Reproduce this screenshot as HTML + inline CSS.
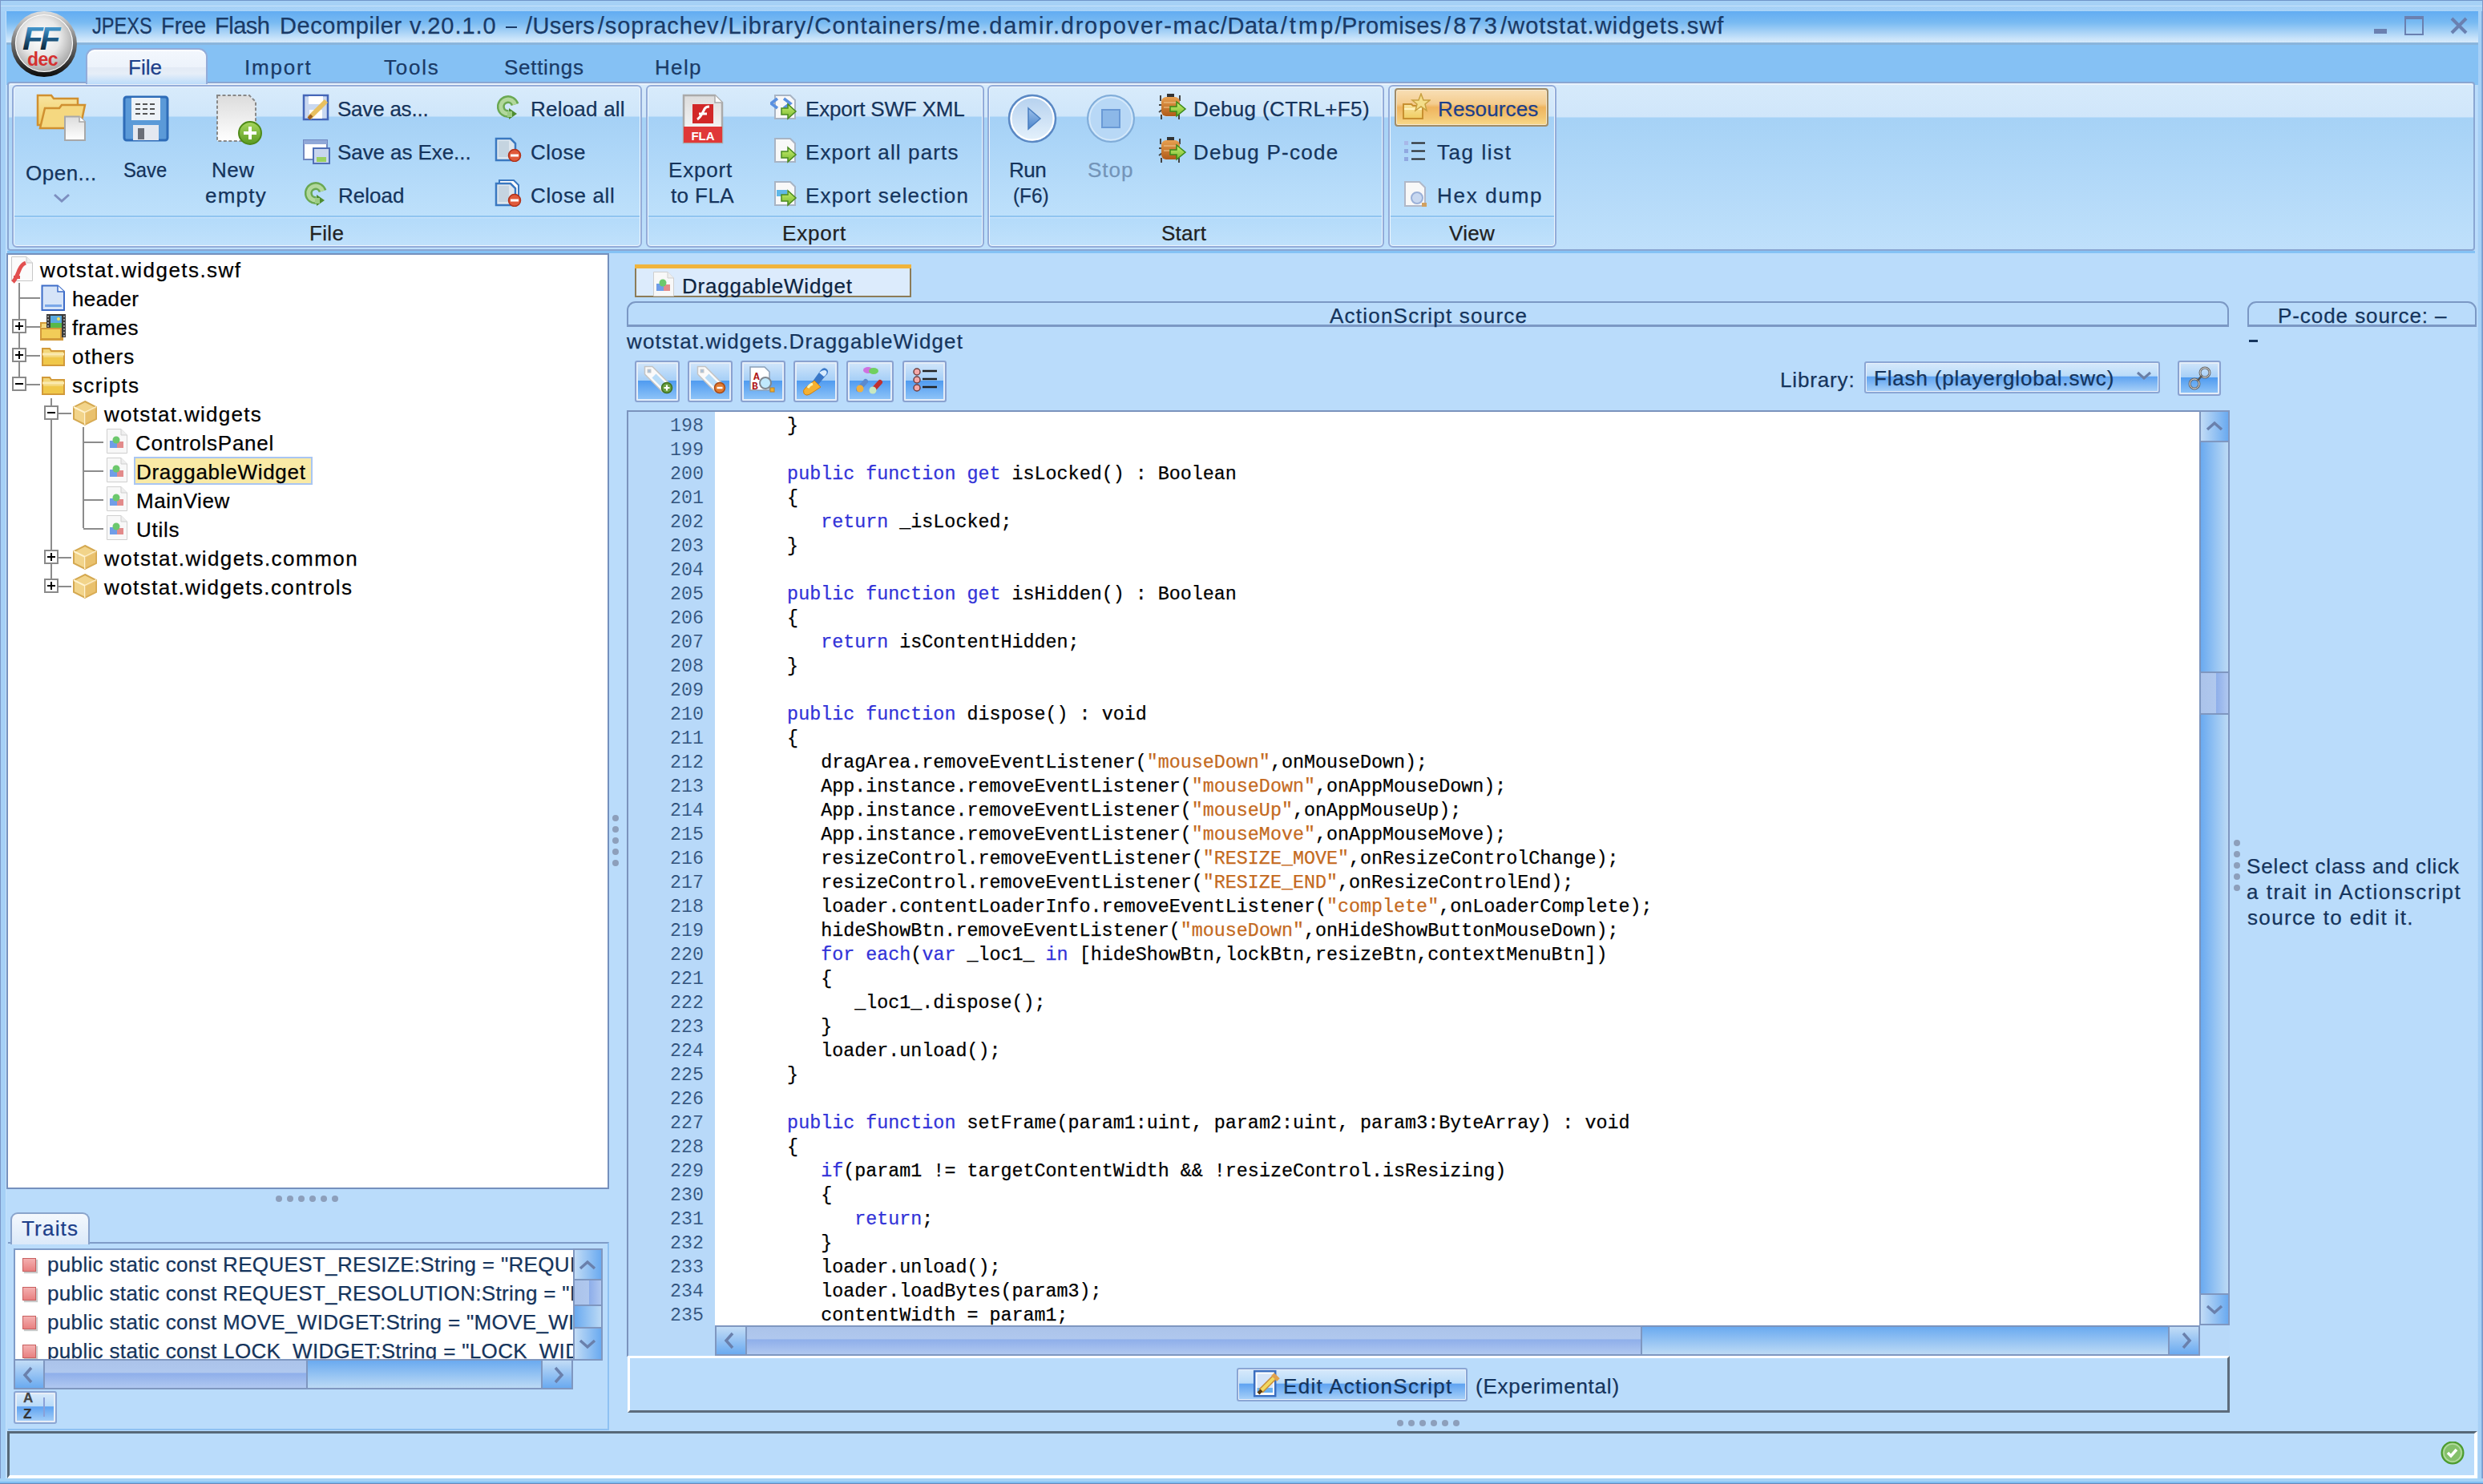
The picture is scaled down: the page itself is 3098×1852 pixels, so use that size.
<!DOCTYPE html>
<html><head><meta charset="utf-8">
<style>
html,body{margin:0;padding:0;}
body{width:3098px;height:1852px;position:relative;overflow:hidden;background:#badcfb;font-family:"Liberation Sans",sans-serif;}
body div{position:absolute;box-sizing:border-box;}
.t{white-space:pre;-webkit-text-stroke:0.25px currentColor;}
.mono{font-family:"Liberation Mono",monospace;}
</style></head><body>

<div style="left:0px;top:0px;width:3098px;height:1852px;background:linear-gradient(90deg,#7c98c8 0,#7c98c8 1px,#a6d0f6 1px,#a6d0f6 7px,#c5e2fb 7px,#c5e2fb 8px,transparent 8px,transparent 3091px,#c5e2fb 3091px,#a6d0f6 3092px,#a6d0f6 3096px,#7fbdf2 3096px,#7c98c8 3097px);"></div>
<div style="left:0px;top:0px;width:3098px;height:14px;background:linear-gradient(#7095c8 0,#7095c8 1px,#a6d1f6 1px,#a6d1f6 7px,#c8e3fb 7px,#c8e3fb 8px,#a6d1f6 8px,#a9d3f8 14px);"></div>
<div style="left:0px;top:0px;width:1px;height:1852px;background:#7c98c8;"></div>
<div style="left:3097px;top:0px;width:1px;height:1852px;background:#7c98c8;"></div>
<div style="left:8px;top:14px;width:3084px;height:40px;background:linear-gradient(#62acf2 0%,#78baf2 35%,#a8d2f6 65%,#c8e3fa 85%,#d6eafb 97%);"></div>
<div style="left:8px;top:53px;width:3084px;height:3px;background:#8ab5dc;"></div>
<div style="left:8px;top:56px;width:3084px;height:50px;background:#85c1f4;"></div>
<div style="left:0px;top:1845px;width:3098px;height:7px;background:linear-gradient(#a5d3f7 0,#a5d3f7 4px,#7fbff3 4px,#7fbff3 6px,#6a88b8 6px);"></div>
<div class="t" style="left:114.70px;top:18.45px;font-size:29px;line-height:29px;color:#1a3a66;letter-spacing:0.000px;transform:scaleX(0.8141);transform-origin:0px 0;">JPEXS</div>
<div class="t" style="left:200.50px;top:18.45px;font-size:29px;line-height:29px;color:#1a3a66;letter-spacing:0.000px;transform:scaleX(0.9417);transform-origin:0px 0;">Free</div>
<div class="t" style="left:268.00px;top:18.45px;font-size:29px;line-height:29px;color:#1a3a66;letter-spacing:-0.500px;">Flash</div>
<div class="t" style="left:349.00px;top:18.45px;font-size:29px;line-height:29px;color:#1a3a66;letter-spacing:0.600px;">Decompiler</div>
<div class="t" style="left:511.00px;top:18.45px;font-size:29px;line-height:29px;color:#1a3a66;letter-spacing:0.943px;">v.20.1.0</div>
<div style="left:631px;top:33px;width:14px;height:2px;background:#1a3a66;"></div>
<div class="t" style="left:656.00px;top:18.45px;font-size:29px;line-height:29px;color:#1a3a66;letter-spacing:0.400px;">/Users</div>
<div class="t" style="left:745.70px;top:18.45px;font-size:29px;line-height:29px;color:#1a3a66;letter-spacing:1.000px;">/soprachev</div>
<div class="t" style="left:899.00px;top:18.45px;font-size:29px;line-height:29px;color:#1a3a66;letter-spacing:1.357px;">/Library</div>
<div class="t" style="left:1006.70px;top:18.45px;font-size:29px;line-height:29px;color:#1a3a66;letter-spacing:1.390px;">/Containers</div>
<div class="t" style="left:1171.00px;top:18.45px;font-size:29px;line-height:29px;color:#1a3a66;letter-spacing:1.743px;">/me.damir.dropover-mac</div>
<div class="t" style="left:1522.80px;top:18.45px;font-size:29px;line-height:29px;color:#1a3a66;letter-spacing:0.550px;">/Data</div>
<div class="t" style="left:1597.70px;top:18.45px;font-size:29px;line-height:29px;color:#1a3a66;letter-spacing:3.100px;">/tmp</div>
<div class="t" style="left:1665.40px;top:18.45px;font-size:29px;line-height:29px;color:#1a3a66;letter-spacing:0.512px;">/Promises</div>
<div class="t" style="left:1802.00px;top:18.45px;font-size:29px;line-height:29px;color:#1a3a66;letter-spacing:3.133px;">/873</div>
<div class="t" style="left:1872.00px;top:18.45px;font-size:29px;line-height:29px;color:#1a3a66;letter-spacing:1.074px;">/wotstat.widgets.swf</div>
<div style="left:2962px;top:36px;width:16px;height:6px;background:#6a80b0;"></div>
<div style="left:3000px;top:20px;width:24px;height:24px;border:2px solid #6a80b0;border-top-width:4px;"></div>
<svg style="position:absolute;left:3057px;top:21px" width="22" height="22" viewBox="0 0 22 22"><path d="M2 2L20 20M20 2L2 20" stroke="#6a80b0" stroke-width="4"/></svg>
<svg style="position:absolute;left:12px;top:12px" width="86" height="86" viewBox="0 0 86 86">
<defs>
<radialGradient id="lg1" cx="45%" cy="40%" r="60%"><stop offset="0" stop-color="#ffffff"/><stop offset="0.55" stop-color="#e8e8e8"/><stop offset="1" stop-color="#a8a8a8"/></radialGradient>
<linearGradient id="lg2" x1="0" y1="0" x2="0" y2="1"><stop offset="0" stop-color="#e0e0e0"/><stop offset="0.45" stop-color="#7a7a7a"/><stop offset="1" stop-color="#0a0a0a"/></linearGradient>
<linearGradient id="lg3" x1="0" y1="0" x2="0" y2="1"><stop offset="0" stop-color="#5ab8f2"/><stop offset="0.45" stop-color="#236392"/><stop offset="1" stop-color="#000000"/></linearGradient>
</defs>
<circle cx="43" cy="43" r="41" fill="url(#lg2)"/>
<circle cx="43" cy="42" r="35.5" fill="url(#lg1)" stroke="#fff" stroke-width="1.2"/>
<text x="16" y="53" font-family="Liberation Sans" font-weight="bold" font-style="italic" font-size="42" fill="url(#lg3)" letter-spacing="-4" transform="scale(1,0.95)">FF</text>
<text x="22" y="70" font-family="Liberation Sans" font-weight="bold" font-size="23" fill="#d43030" letter-spacing="-0.5">dec</text>
</svg>
<div class="t" style="left:305.00px;top:70.99px;font-size:26px;line-height:26px;color:#1a3a66;letter-spacing:1.800px;">Import</div>
<div class="t" style="left:479.00px;top:70.99px;font-size:26px;line-height:26px;color:#1a3a66;letter-spacing:1.750px;">Tools</div>
<div class="t" style="left:629.00px;top:70.99px;font-size:26px;line-height:26px;color:#1a3a66;letter-spacing:0.714px;">Settings</div>
<div class="t" style="left:817.00px;top:70.99px;font-size:26px;line-height:26px;color:#1a3a66;letter-spacing:1.333px;">Help</div>
<div style="left:9px;top:102px;width:3079px;height:211px;border:2px solid #8aa6d2;border-radius:4px;box-shadow:inset 0 2px 0 #eaf2fb;background:linear-gradient(#d6eafb 0px,#d0e6fa 42px,#a6d2f6 43px,#bfe0fb 100%);"></div>
<div style="left:9px;top:313px;width:3079px;height:3px;background:#84c2f5;"></div>
<div style="left:107px;top:60px;width:152px;height:45px;border:2px solid #93acd9;border-bottom:none;border-radius:11px 11px 0 0;box-shadow:inset 0 2px 0 #fff;background:linear-gradient(#f3f7fd 0%,#edf3fb 50%,#e3eaf5 51%,#e6eef8 70%,#bcdcfa 100%);"></div>
<div class="t" style="left:160.00px;top:70.99px;font-size:26px;line-height:26px;color:#1d3f8a;letter-spacing:0.000px;">File</div>
<div style="left:15px;top:106px;width:786px;height:203px;border:2px solid #93acd9;border-radius:6px;box-shadow:inset 0 0 0 1px #eef6fd;background:linear-gradient(#d8ebfb 0px,#cfe6fa 37px,#a5d1f6 38px,#bde0fb 161px,#90c4f0 161px,#90c4f0 163px,#cfe6fb 163px,#b4dbfa 165px,#c0e1fb 100%);"></div>
<div class="t" style="left:386.00px;top:277.99px;font-size:26px;line-height:26px;color:#222222;letter-spacing:0.333px;">File</div>
<div style="left:806px;top:106px;width:422px;height:203px;border:2px solid #93acd9;border-radius:6px;box-shadow:inset 0 0 0 1px #eef6fd;background:linear-gradient(#d8ebfb 0px,#cfe6fa 37px,#a5d1f6 38px,#bde0fb 161px,#90c4f0 161px,#90c4f0 163px,#cfe6fb 163px,#b4dbfa 165px,#c0e1fb 100%);"></div>
<div class="t" style="left:976.00px;top:277.99px;font-size:26px;line-height:26px;color:#222222;letter-spacing:0.800px;">Export</div>
<div style="left:1232px;top:106px;width:495px;height:203px;border:2px solid #93acd9;border-radius:6px;box-shadow:inset 0 0 0 1px #eef6fd;background:linear-gradient(#d8ebfb 0px,#cfe6fa 37px,#a5d1f6 38px,#bde0fb 161px,#90c4f0 161px,#90c4f0 163px,#cfe6fb 163px,#b4dbfa 165px,#c0e1fb 100%);"></div>
<div class="t" style="left:1449.00px;top:277.99px;font-size:26px;line-height:26px;color:#222222;letter-spacing:0.250px;">Start</div>
<div style="left:1732px;top:106px;width:210px;height:203px;border:2px solid #93acd9;border-radius:6px;box-shadow:inset 0 0 0 1px #eef6fd;background:linear-gradient(#d8ebfb 0px,#cfe6fa 37px,#a5d1f6 38px,#bde0fb 161px,#90c4f0 161px,#90c4f0 163px,#cfe6fb 163px,#b4dbfa 165px,#c0e1fb 100%);"></div>
<div class="t" style="left:1808.00px;top:277.99px;font-size:26px;line-height:26px;color:#222222;letter-spacing:0.333px;">View</div>
<div class="t" style="left:32.00px;top:202.99px;font-size:26px;line-height:26px;color:#15345c;letter-spacing:0.500px;">Open...</div>
<div class="t" style="left:154.00px;top:198.99px;font-size:26px;line-height:26px;color:#15345c;letter-spacing:0.000px;transform:scaleX(0.9153);transform-origin:0px 0;">Save</div>
<div class="t" style="left:264.00px;top:198.99px;font-size:26px;line-height:26px;color:#15345c;letter-spacing:0.500px;">New</div>
<div class="t" style="left:256.00px;top:230.99px;font-size:26px;line-height:26px;color:#15345c;letter-spacing:1.250px;">empty</div>
<div class="t" style="left:421.00px;top:122.99px;font-size:26px;line-height:26px;color:#15345c;letter-spacing:-0.222px;">Save as...</div>
<div class="t" style="left:421.00px;top:176.99px;font-size:26px;line-height:26px;color:#15345c;letter-spacing:-0.077px;">Save as Exe...</div>
<div class="t" style="left:422.00px;top:230.99px;font-size:26px;line-height:26px;color:#15345c;letter-spacing:0.000px;">Reload</div>
<div class="t" style="left:662.00px;top:122.99px;font-size:26px;line-height:26px;color:#15345c;letter-spacing:0.222px;">Reload all</div>
<div class="t" style="left:662.00px;top:176.99px;font-size:26px;line-height:26px;color:#15345c;letter-spacing:0.500px;">Close</div>
<div class="t" style="left:662.00px;top:230.99px;font-size:26px;line-height:26px;color:#15345c;letter-spacing:0.625px;">Close all</div>
<div class="t" style="left:834.00px;top:198.99px;font-size:26px;line-height:26px;color:#15345c;letter-spacing:0.800px;">Export</div>
<div class="t" style="left:837.00px;top:230.99px;font-size:26px;line-height:26px;color:#15345c;letter-spacing:0.400px;">to FLA</div>
<div class="t" style="left:1005.00px;top:122.99px;font-size:26px;line-height:26px;color:#15345c;letter-spacing:-0.154px;">Export SWF XML</div>
<div class="t" style="left:1005.00px;top:176.99px;font-size:26px;line-height:26px;color:#15345c;letter-spacing:1.133px;">Export all parts</div>
<div class="t" style="left:1005.00px;top:230.99px;font-size:26px;line-height:26px;color:#15345c;letter-spacing:1.200px;">Export selection</div>
<div class="t" style="left:1259.00px;top:198.99px;font-size:26px;line-height:26px;color:#15345c;letter-spacing:-0.500px;">Run</div>
<div class="t" style="left:1264.00px;top:230.99px;font-size:26px;line-height:26px;color:#15345c;letter-spacing:0.000px;transform:scaleX(0.9375);transform-origin:0px 0;">(F6)</div>
<div class="t" style="left:1357.00px;top:198.99px;font-size:26px;line-height:26px;color:#7394b8;letter-spacing:1.000px;">Stop</div>
<div class="t" style="left:1489.00px;top:122.99px;font-size:26px;line-height:26px;color:#15345c;letter-spacing:0.357px;">Debug (CTRL+F5)</div>
<div class="t" style="left:1489.00px;top:176.99px;font-size:26px;line-height:26px;color:#15345c;letter-spacing:1.273px;">Debug P-code</div>
<div style="left:1740px;top:110px;width:192px;height:48px;border:2px solid #a08c68;border-radius:4px;box-shadow:inset 0 0 0 1px #f6e9cf;background:linear-gradient(#f8dfb6 0%,#f4cc8e 40%,#efb45e 50%,#f3c774 80%,#f8da8c 100%);"></div>
<div class="t" style="left:1794.00px;top:122.99px;font-size:26px;line-height:26px;color:#1d3f8a;letter-spacing:0.125px;">Resources</div>
<div class="t" style="left:1793.00px;top:176.99px;font-size:26px;line-height:26px;color:#15345c;letter-spacing:1.571px;">Tag list</div>
<div class="t" style="left:1793.00px;top:230.99px;font-size:26px;line-height:26px;color:#15345c;letter-spacing:1.714px;">Hex dump</div>
<svg width="0" height="0" style="position:absolute"><defs>
<linearGradient id="gFold" x1="0" y1="0" x2="0" y2="1"><stop offset="0" stop-color="#f8e4a0"/><stop offset="1" stop-color="#f0cc60"/></linearGradient>
<linearGradient id="gPage" x1="0" y1="0" x2="0" y2="1"><stop offset="0" stop-color="#dcdcdc"/><stop offset="1" stop-color="#ffffff"/></linearGradient>
<linearGradient id="gGreen" x1="0" y1="0" x2="0" y2="1"><stop offset="0" stop-color="#a8d860"/><stop offset="1" stop-color="#5a9a20"/></linearGradient>
<linearGradient id="gArrow" x1="0" y1="0" x2="0" y2="1"><stop offset="0" stop-color="#c8f070"/><stop offset="1" stop-color="#7ab830"/></linearGradient>
<linearGradient id="gRun" x1="0" y1="0" x2="0" y2="1"><stop offset="0" stop-color="#b4d0ee"/><stop offset="1" stop-color="#e6f2fc"/></linearGradient>
<linearGradient id="gTri" x1="0" y1="0" x2="0" y2="1"><stop offset="0" stop-color="#9cc0ea"/><stop offset="1" stop-color="#4d86cc"/></linearGradient>
<linearGradient id="gBug" x1="0" y1="0" x2="0" y2="1"><stop offset="0" stop-color="#e8a050"/><stop offset="1" stop-color="#b05a18"/></linearGradient>
<radialGradient id="gOk" cx="40%" cy="35%" r="65%"><stop offset="0" stop-color="#b8e890"/><stop offset="1" stop-color="#4a9a28"/></radialGradient>
</defs></svg>
<svg style="position:absolute;left:44px;top:116px" width="66" height="62" viewBox="0 0 66 62"><path d="M3 3H20L23 7H53V40H3Z" fill="url(#gFold)" stroke="#d09030" stroke-width="2.5"/><path d="M6 44L12 19H30L33 15H62L56 44Z" fill="#f5d880" stroke="#d09030" stroke-width="2.5"/><path d="M37 29.5H55L62 36V59H37Z" fill="url(#gPage)" stroke="#a8a8a8" stroke-width="2"/><path d="M55 29.5V36H62" fill="#fff" stroke="#a8a8a8" stroke-width="1.5"/></svg>
<svg style="position:absolute;left:152px;top:118px" width="60" height="60" viewBox="0 0 60 60"><rect x="3" y="3" width="54" height="54" rx="3" fill="#5b9ad8" stroke="#2e6cb8" stroke-width="3"/><rect x="12" y="4" width="36" height="28" fill="#eef3f8"/><path d="M17 12H42M17 18H42M17 24H42" stroke="#555" stroke-width="2" stroke-dasharray="6 3"/><rect x="14" y="38" width="32" height="19" fill="#e4e8f0"/><rect x="20" y="42" width="8" height="14" fill="#6a6e78"/></svg>
<svg style="position:absolute;left:268px;top:116px" width="62" height="66" viewBox="0 0 62 66"><path d="M3 3H43L51 11V60H3Z" fill="url(#gPage)" stroke="#888" stroke-width="2" stroke-dasharray="4 2.5"/><circle cx="44" cy="50" r="14" fill="url(#gGreen)" stroke="#4e8a18" stroke-width="2"/><path d="M44 42V58M36 50H52" stroke="#fff" stroke-width="4"/></svg>
<svg style="position:absolute;left:377px;top:117px" width="34" height="34" viewBox="0 0 34 34"><rect x="2" y="2" width="30" height="30" fill="#c9d8f0" stroke="#4466b8" stroke-width="2.5"/><rect x="8" y="3" width="18" height="10" fill="#fff"/><rect x="9" y="20" width="16" height="11" fill="#fff"/><path d="M9 30L30 9" stroke="#e8c060" stroke-width="6"/><path d="M8 31L12 27" stroke="#a06020" stroke-width="4"/></svg>
<svg style="position:absolute;left:377px;top:172px" width="36" height="34" viewBox="0 0 36 34"><rect x="2" y="3" width="29" height="24" fill="#fff" stroke="#7088c0" stroke-width="2"/><rect x="2" y="3" width="29" height="5" fill="#90a8d8"/><rect x="14" y="13" width="20" height="19" fill="#c8d6ee" stroke="#5070b8" stroke-width="2"/><rect x="18" y="24" width="12" height="6" fill="#9ad060"/></svg>
<svg style="position:absolute;left:380px;top:227px" width="30" height="32" viewBox="0 0 30 32"><path d="M22.5 11.5A9 9 0 1 0 15 23" stroke="#6aa852" stroke-width="10" fill="none"/><path d="M22.5 11.5A9 9 0 1 0 15 23" stroke="#b2d89c" stroke-width="5" fill="none"/><path d="M15 16L25 23L15 30Z" fill="#4e8c30"/><path d="M13 20H19V27H13Z" fill="#9ccc84"/></svg>
<svg style="position:absolute;left:620px;top:119px" width="30" height="32" viewBox="0 0 30 32"><path d="M22.5 11.5A9 9 0 1 0 15 23" stroke="#6aa852" stroke-width="10" fill="none"/><path d="M22.5 11.5A9 9 0 1 0 15 23" stroke="#b2d89c" stroke-width="5" fill="none"/><path d="M15 16L25 23L15 30Z" fill="#4e8c30"/><path d="M13 20H19V27H13Z" fill="#9ccc84"/></svg>
<svg style="position:absolute;left:617px;top:168px" width="34" height="34" viewBox="0 0 34 34"><path d="M2 5H20L26 11V32H2Z" fill="#dde6ee" stroke="#3a78c0" stroke-width="2.5"/><rect x="5" y="8" width="13" height="20" fill="#c5d4e0"/><circle cx="25" cy="26" r="7.5" fill="#e05a3a" stroke="#b03018" stroke-width="1.5"/><rect x="20" y="24.5" width="10" height="3" fill="#fff"/></svg>
<svg style="position:absolute;left:617px;top:224px" width="34" height="34" viewBox="0 0 34 34"><path d="M6 1H24L30 7V26H6Z" fill="#fff" stroke="#3a78c0" stroke-width="2"/><path d="M2 5H20L26 11V32H2Z" fill="#dde6ee" stroke="#3a78c0" stroke-width="2.5"/><rect x="5" y="8" width="13" height="20" fill="#c5d4e0"/><circle cx="25" cy="26" r="7.5" fill="#e05a3a" stroke="#b03018" stroke-width="1.5"/><rect x="20" y="24.5" width="10" height="3" fill="#fff"/></svg>
<svg style="position:absolute;left:850px;top:116px" width="54" height="64" viewBox="0 0 54 64"><path d="M3 3H42L51 12V62H3Z" fill="url(#gPage)" stroke="#aaa" stroke-width="2.5"/><path d="M42 3V12H51" fill="#fff" stroke="#aaa" stroke-width="1.5"/><rect x="14" y="14" width="26" height="24" fill="#d22828"/><path d="M20 33C25 30 27 24 29 20C30 18 32 17 35 17M22 26H32" stroke="#fff" stroke-width="3" fill="none"/><rect x="3" y="42" width="48" height="20" fill="#e03838"/><text x="27" y="59" text-anchor="middle" font-family="Liberation Sans" font-weight="bold" font-size="15" fill="#fff">FLA</text></svg>
<svg style="position:absolute;left:961px;top:117px" width="34" height="34" viewBox="0 0 34 34"><path d="M6 2H25L31 8V31H6Z" fill="#f8f8f8" stroke="#a8b4c4" stroke-width="2"/><path d="M9 6L1 12L9 18M17 6L25 12L17 18" stroke="#5a90e0" stroke-width="3.5" fill="none"/><path d="M14 18H22V13L32 22L22 31V26H14Z" fill="url(#gArrow)" stroke="#4a8a20" stroke-width="1.5"/></svg>
<svg style="position:absolute;left:961px;top:171px" width="34" height="34" viewBox="0 0 34 34"><path d="M6 2H25L31 8V31H6Z" fill="#f8f8f8" stroke="#a8b4c4" stroke-width="2"/><path d="M14 18H22V13L32 22L22 31V26H14Z" fill="url(#gArrow)" stroke="#4a8a20" stroke-width="1.5"/></svg>
<svg style="position:absolute;left:961px;top:225px" width="34" height="34" viewBox="0 0 34 34"><path d="M6 2H25L31 8V31H6Z" fill="#f8f8f8" stroke="#a8b4c4" stroke-width="2"/><rect x="8" y="12" width="13" height="8" fill="#60b8e8"/><path d="M14 18H22V13L32 22L22 31V26H14Z" fill="url(#gArrow)" stroke="#4a8a20" stroke-width="1.5"/></svg>
<svg style="position:absolute;left:1256px;top:116px" width="64" height="64" viewBox="0 0 64 64"><circle cx="32" cy="32" r="29" fill="url(#gRun)" stroke="#5a88c4" stroke-width="2.5"/><circle cx="32" cy="32" r="26.5" fill="none" stroke="#fff" stroke-width="2"/><path d="M27 19L42 32L27 45Z" fill="url(#gTri)" stroke="#4a7ec0" stroke-width="1.5"/></svg>
<svg style="position:absolute;left:1354px;top:116px" width="64" height="64" viewBox="0 0 64 64"><circle cx="32" cy="32" r="29" fill="#b8d8f6" stroke="#80acd8" stroke-width="2"/><circle cx="32" cy="32" r="26.5" fill="none" stroke="#d8eafa" stroke-width="1.5"/><rect x="21" y="21" width="22" height="22" fill="#8cb8e8" stroke="#6a9ad6" stroke-width="2"/></svg>
<svg style="position:absolute;left:1445px;top:116px" width="36" height="34" viewBox="0 0 36 34"><path d="M3 3V10M27 3V10M1 15H5M1 24L5 21M4 27V33M26 27V33" stroke="#444" stroke-width="2"/><rect x="11" y="1" width="9" height="5" fill="#333"/><rect x="4" y="5" width="23" height="24" rx="6" fill="url(#gBug)"/><path d="M7 12H24M7 18H24" stroke="#f0c890" stroke-width="1.5" opacity=".7"/><path d="M15 17H23V11L34 20L23 29V23H15Z" fill="url(#gArrow)" stroke="#3a8a18" stroke-width="1.5"/></svg>
<svg style="position:absolute;left:1445px;top:170px" width="36" height="34" viewBox="0 0 36 34"><path d="M3 3V10M27 3V10M1 15H5M1 24L5 21M4 27V33M26 27V33" stroke="#444" stroke-width="2"/><rect x="11" y="1" width="9" height="5" fill="#333"/><rect x="4" y="5" width="23" height="24" rx="6" fill="url(#gBug)"/><path d="M7 12H24M7 18H24" stroke="#f0c890" stroke-width="1.5" opacity=".7"/><path d="M15 17H23V11L34 20L23 29V23H15Z" fill="url(#gArrow)" stroke="#3a8a18" stroke-width="1.5"/></svg>
<svg style="position:absolute;left:1749px;top:116px" width="36" height="36" viewBox="0 0 36 36"><path d="M2 14H12L14 16H26V32H2Z" fill="url(#gFold)" stroke="#c89030" stroke-width="2"/><path d="M3 20H25" stroke="#fff3c0" stroke-width="2"/><path d="M24 1L27 9L35 9L29 14L31 22L24 17L17 22L19 14L13 9L21 9Z" fill="#f4de8a" stroke="#c8a040" stroke-width="1.5"/></svg>
<svg style="position:absolute;left:1750px;top:174px" width="30" height="30" viewBox="0 0 30 30"><rect x="2" y="2" width="5" height="5" fill="#a8b8e8"/><rect x="2" y="12" width="5" height="5" fill="#90a8e0"/><rect x="2" y="22" width="5" height="5" fill="#90a8e0"/><path d="M11 4.5H28M11 14.5H28M11 24.5H28" stroke="#222" stroke-width="2"/></svg>
<svg style="position:absolute;left:1750px;top:225px" width="36" height="36" viewBox="0 0 36 36"><path d="M3 2H21L28 9V32H3Z" fill="#f8f8f8" stroke="#b0b8c8" stroke-width="2"/><circle cx="18" cy="22" r="7" fill="#c8d8f0" stroke="#9ab0d8" stroke-width="2"/><rect x="24" y="28" width="6" height="5" fill="#d0a060"/></svg>
<svg style="position:absolute;left:65px;top:240px" width="24" height="14" viewBox="0 0 24 14"><path d="M3 3L12 11L21 3" stroke="#7d8fc0" stroke-width="3" fill="none"/></svg>
<div style="left:8px;top:316px;width:752px;height:1168px;background:#fff;border:2px solid #7590bd;"></div>
<div style="left:23px;top:353px;width:2px;height:126px;background:#8c8c8c;"></div>
<div style="left:24px;top:371px;width:26px;height:2px;background:#8c8c8c;"></div>
<div style="left:24px;top:407px;width:26px;height:2px;background:#8c8c8c;"></div>
<div style="left:24px;top:443px;width:26px;height:2px;background:#8c8c8c;"></div>
<div style="left:24px;top:479px;width:26px;height:2px;background:#8c8c8c;"></div>
<div style="left:15px;top:398px;width:18px;height:18px;background:#fff;border:2px solid #8a8a8a;"></div>
<div style="left:19px;top:406px;width:10px;height:2px;background:#000;"></div>
<div style="left:23px;top:402px;width:2px;height:10px;background:#000;"></div>
<div style="left:15px;top:434px;width:18px;height:18px;background:#fff;border:2px solid #8a8a8a;"></div>
<div style="left:19px;top:442px;width:10px;height:2px;background:#000;"></div>
<div style="left:23px;top:438px;width:2px;height:10px;background:#000;"></div>
<div style="left:15px;top:470px;width:18px;height:18px;background:#fff;border:2px solid #8a8a8a;"></div>
<div style="left:19px;top:478px;width:10px;height:2px;background:#000;"></div>
<div style="left:63px;top:497px;width:2px;height:234px;background:#8c8c8c;"></div>
<div style="left:64px;top:515px;width:25px;height:2px;background:#8c8c8c;"></div>
<div style="left:64px;top:695px;width:25px;height:2px;background:#8c8c8c;"></div>
<div style="left:64px;top:731px;width:25px;height:2px;background:#8c8c8c;"></div>
<div style="left:55px;top:506px;width:18px;height:18px;background:#fff;border:2px solid #8a8a8a;"></div>
<div style="left:59px;top:514px;width:10px;height:2px;background:#000;"></div>
<div style="left:55px;top:686px;width:18px;height:18px;background:#fff;border:2px solid #8a8a8a;"></div>
<div style="left:59px;top:694px;width:10px;height:2px;background:#000;"></div>
<div style="left:63px;top:690px;width:2px;height:10px;background:#000;"></div>
<div style="left:55px;top:722px;width:18px;height:18px;background:#fff;border:2px solid #8a8a8a;"></div>
<div style="left:59px;top:730px;width:10px;height:2px;background:#000;"></div>
<div style="left:63px;top:726px;width:2px;height:10px;background:#000;"></div>
<div style="left:103px;top:533px;width:2px;height:126px;background:#8c8c8c;"></div>
<div style="left:104px;top:551px;width:25px;height:2px;background:#8c8c8c;"></div>
<div style="left:104px;top:587px;width:25px;height:2px;background:#8c8c8c;"></div>
<div style="left:104px;top:623px;width:25px;height:2px;background:#8c8c8c;"></div>
<div style="left:104px;top:659px;width:25px;height:2px;background:#8c8c8c;"></div>
<svg style="position:absolute;left:8px;top:318px" width="36" height="36" viewBox="0 0 36 36"><path d="M6.5 2.5H25L32.5 10V32.5H6.5Z" fill="#fbfbfb" stroke="#c8c8c8"/><path d="M25 2.5V10H32.5" fill="#eee" stroke="#c8c8c8"/><path d="M8 34C12 30 14 24 16 19C18 14 21 11 24 10" stroke="#e25050" stroke-width="5" fill="none"/><path d="M9 28H17" stroke="#e25050" stroke-width="4"/></svg>
<svg style="position:absolute;left:50px;top:354px" width="34" height="36" viewBox="0 0 34 36"><path d="M2.5 2.5H22L30 10V33H2.5Z" fill="#d6e4f8" stroke="#3d6cc8" stroke-width="2"/><rect x="6" y="26" width="21" height="3" fill="#7aa7e8"/><path d="M22 2.5V10H30" fill="#fff" stroke="#3d6cc8" stroke-width="1.5"/></svg>
<svg style="position:absolute;left:50px;top:390px" width="36" height="36" viewBox="0 0 36 36"><path d="M1 13H10L12 16H28V34H1Z" fill="#f3d77a" stroke="#d29a3a" stroke-width="2"/><path d="M1 20H28" stroke="#fbeab0" stroke-width="3"/><rect x="2" y="24" width="25" height="9" fill="#f0c84a"/><rect x="8" y="2" width="24" height="29" fill="#3a3a3a"/><path d="M10 4V30M30 4V30" stroke="#9a9a9a" stroke-width="2" stroke-dasharray="2 2"/><rect x="13" y="4" width="14" height="16" fill="#5aaae0"/><rect x="13" y="13" width="14" height="7" fill="#58b848"/><circle cx="23" cy="8" r="2" fill="#f0e060"/><path d="M1 20H26V33H1Z" fill="#f2cc58" stroke="#d29a3a" stroke-width="2"/></svg>
<svg style="position:absolute;left:50px;top:426px" width="36" height="36" viewBox="0 0 36 36"><path d="M3 9H12L14 12H30V30H3Z" fill="#f3d77a" stroke="#d29a3a" stroke-width="2"/><path d="M3 16H30" stroke="#fbeab0" stroke-width="3"/><rect x="4" y="20" width="25" height="9" fill="#f0c84a"/></svg>
<svg style="position:absolute;left:50px;top:462px" width="36" height="36" viewBox="0 0 36 36"><path d="M3 9H12L14 12H30V30H3Z" fill="#f3d77a" stroke="#d29a3a" stroke-width="2"/><path d="M3 16H30" stroke="#fbeab0" stroke-width="3"/><rect x="4" y="20" width="25" height="9" fill="#f0c84a"/></svg>
<svg style="position:absolute;left:89px;top:498px" width="34" height="34" viewBox="0 0 34 34"><path d="M17 3L31 10V25L17 32L3 25V10Z" fill="#f2d48a" stroke="#d4a850" stroke-width="2"/><path d="M3 10L17 17L31 10M17 17V32" stroke="#fff3cf" stroke-width="2" fill="none"/><path d="M17 17L31 10V25L17 32Z" fill="#e2b45a" opacity=".6"/></svg>
<svg style="position:absolute;left:89px;top:678px" width="34" height="34" viewBox="0 0 34 34"><path d="M17 3L31 10V25L17 32L3 25V10Z" fill="#f2d48a" stroke="#d4a850" stroke-width="2"/><path d="M3 10L17 17L31 10M17 17V32" stroke="#fff3cf" stroke-width="2" fill="none"/><path d="M17 17L31 10V25L17 32Z" fill="#e2b45a" opacity=".6"/></svg>
<svg style="position:absolute;left:89px;top:714px" width="34" height="34" viewBox="0 0 34 34"><path d="M17 3L31 10V25L17 32L3 25V10Z" fill="#f2d48a" stroke="#d4a850" stroke-width="2"/><path d="M3 10L17 17L31 10M17 17V32" stroke="#fff3cf" stroke-width="2" fill="none"/><path d="M17 17L31 10V25L17 32Z" fill="#e2b45a" opacity=".6"/></svg>
<svg style="position:absolute;left:130px;top:534px" width="32" height="34" viewBox="0 0 32 34"><path d="M3.5 1.5H21L28.5 9V31.5H3.5Z" fill="#f8f8f8" stroke="#cfcfcf"/><path d="M21 1.5V9H28.5" fill="#eee" stroke="#cfcfcf"/><rect x="7" y="16" width="9" height="9" fill="#6f9de8"/><rect x="16" y="17" width="8" height="8" fill="#e28a8a"/><circle cx="15" cy="15" r="4.5" fill="#6cc86c"/></svg>
<svg style="position:absolute;left:130px;top:570px" width="32" height="34" viewBox="0 0 32 34"><path d="M3.5 1.5H21L28.5 9V31.5H3.5Z" fill="#f8f8f8" stroke="#cfcfcf"/><path d="M21 1.5V9H28.5" fill="#eee" stroke="#cfcfcf"/><rect x="7" y="16" width="9" height="9" fill="#6f9de8"/><rect x="16" y="17" width="8" height="8" fill="#e28a8a"/><circle cx="15" cy="15" r="4.5" fill="#6cc86c"/></svg>
<svg style="position:absolute;left:130px;top:606px" width="32" height="34" viewBox="0 0 32 34"><path d="M3.5 1.5H21L28.5 9V31.5H3.5Z" fill="#f8f8f8" stroke="#cfcfcf"/><path d="M21 1.5V9H28.5" fill="#eee" stroke="#cfcfcf"/><rect x="7" y="16" width="9" height="9" fill="#6f9de8"/><rect x="16" y="17" width="8" height="8" fill="#e28a8a"/><circle cx="15" cy="15" r="4.5" fill="#6cc86c"/></svg>
<svg style="position:absolute;left:130px;top:642px" width="32" height="34" viewBox="0 0 32 34"><path d="M3.5 1.5H21L28.5 9V31.5H3.5Z" fill="#f8f8f8" stroke="#cfcfcf"/><path d="M21 1.5V9H28.5" fill="#eee" stroke="#cfcfcf"/><rect x="7" y="16" width="9" height="9" fill="#6f9de8"/><rect x="16" y="17" width="8" height="8" fill="#e28a8a"/><circle cx="15" cy="15" r="4.5" fill="#6cc86c"/></svg>
<div style="left:167px;top:570px;width:223px;height:35px;background:#f9eaa6;border:2px solid #a9c6f2;"></div>
<div class="t" style="left:50.00px;top:323.99px;font-size:26px;line-height:26px;color:#000000;letter-spacing:1.444px;">wotstat.widgets.swf</div>
<div class="t" style="left:90.00px;top:359.99px;font-size:26px;line-height:26px;color:#000000;letter-spacing:0.400px;">header</div>
<div class="t" style="left:90.00px;top:395.99px;font-size:26px;line-height:26px;color:#000000;letter-spacing:0.600px;">frames</div>
<div class="t" style="left:90.00px;top:431.99px;font-size:26px;line-height:26px;color:#000000;letter-spacing:1.000px;">others</div>
<div class="t" style="left:90.00px;top:467.99px;font-size:26px;line-height:26px;color:#000000;letter-spacing:1.333px;">scripts</div>
<div class="t" style="left:130.00px;top:503.99px;font-size:26px;line-height:26px;color:#000000;letter-spacing:1.286px;">wotstat.widgets</div>
<div class="t" style="left:169.00px;top:539.99px;font-size:26px;line-height:26px;color:#000000;letter-spacing:0.750px;">ControlsPanel</div>
<div class="t" style="left:170.00px;top:575.99px;font-size:26px;line-height:26px;color:#000000;letter-spacing:0.714px;">DraggableWidget</div>
<div class="t" style="left:170.00px;top:611.99px;font-size:26px;line-height:26px;color:#000000;letter-spacing:0.571px;">MainView</div>
<div class="t" style="left:170.00px;top:647.99px;font-size:26px;line-height:26px;color:#000000;letter-spacing:0.750px;">Utils</div>
<div class="t" style="left:130.00px;top:683.99px;font-size:26px;line-height:26px;color:#000000;letter-spacing:1.476px;">wotstat.widgets.common</div>
<div class="t" style="left:130.00px;top:719.99px;font-size:26px;line-height:26px;color:#000000;letter-spacing:1.435px;">wotstat.widgets.controls</div>
<div style="left:344px;top:1492px;width:8px;height:8px;border-radius:50%;background:#8d9fbb;"></div>
<div style="left:358px;top:1492px;width:8px;height:8px;border-radius:50%;background:#8d9fbb;"></div>
<div style="left:372px;top:1492px;width:8px;height:8px;border-radius:50%;background:#8d9fbb;"></div>
<div style="left:386px;top:1492px;width:8px;height:8px;border-radius:50%;background:#8d9fbb;"></div>
<div style="left:400px;top:1492px;width:8px;height:8px;border-radius:50%;background:#8d9fbb;"></div>
<div style="left:414px;top:1492px;width:8px;height:8px;border-radius:50%;background:#8d9fbb;"></div>
<div style="left:10px;top:1550px;width:750px;height:235px;border-top:2px solid #7f9cc8;border-right:2px solid #8ec1f2;border-bottom:2px solid #8ec1f2;"></div>
<div style="left:13px;top:1513px;width:99px;height:40px;border:2px solid #8aa4cc;border-bottom:none;border-radius:9px 9px 0 0;background:linear-gradient(#f4f8fd,#dbe9f9);"></div>
<div class="t" style="left:27.00px;top:1519.99px;font-size:26px;line-height:26px;color:#1d3f8a;letter-spacing:1.200px;">Traits</div>
<div style="left:17px;top:1558px;width:698px;height:140px;background:#fff;border:2px solid #7f9cc8;border-right:none;"></div>
<div style="left:19px;top:1562px;width:696px;height:134px;overflow:hidden">
<div style="left:9px;top:8px;width:17px;height:17px;background:linear-gradient(#f4b0b0,#e88080);border:1.5px solid #c86060;box-shadow:2px 2px 1px #c8c8c8;"></div>
<div class="t" style="left:40px;top:2.99px;font-size:26px;line-height:26px;color:#15345c;letter-spacing:0.333px">public static const REQUEST_RESIZE:String = &quot;REQUEST_RESIZE&quot;;</div>
<div style="left:9px;top:44px;width:17px;height:17px;background:linear-gradient(#f4b0b0,#e88080);border:1.5px solid #c86060;box-shadow:2px 2px 1px #c8c8c8;"></div>
<div class="t" style="left:40px;top:38.99px;font-size:26px;line-height:26px;color:#15345c;letter-spacing:0.333px">public static const REQUEST_RESOLUTION:String = &quot;REQUEST_RESOLUTION&quot;;</div>
<div style="left:9px;top:80px;width:17px;height:17px;background:linear-gradient(#f4b0b0,#e88080);border:1.5px solid #c86060;box-shadow:2px 2px 1px #c8c8c8;"></div>
<div class="t" style="left:40px;top:74.99px;font-size:26px;line-height:26px;color:#15345c;letter-spacing:0.333px">public static const MOVE_WIDGET:String = &quot;MOVE_WIDGET&quot;;</div>
<div style="left:9px;top:116px;width:17px;height:17px;background:linear-gradient(#f4b0b0,#e88080);border:1.5px solid #c86060;box-shadow:2px 2px 1px #c8c8c8;"></div>
<div class="t" style="left:40px;top:110.99px;font-size:26px;line-height:26px;color:#15345c;letter-spacing:0.333px">public static const LOCK_WIDGET:String = &quot;LOCK_WIDGET&quot;;</div>
</div>
<div style="left:715px;top:1558px;width:37px;height:140px;border:2px solid #7f97c0;background:linear-gradient(90deg,#6aaaf0,#bcdaf5);"></div>
<div style="left:715px;top:1558px;width:37px;height:40px;border:2px solid #7f97c0;background:linear-gradient(90deg,#c2dcf6,#6aaaf0);"></div>
<svg style="position:absolute;left:721px;top:1572px" width="24" height="14" viewBox="0 0 24 14"><path d="M3 11L12 3L21 11" stroke="#6a80ac" stroke-width="3.5" fill="none"/></svg>
<div style="left:715px;top:1596px;width:37px;height:34px;border:2px solid #7f97c0;background:linear-gradient(90deg,#abc3ea 0,#b0c8ee 55%,#8eaeea 56%,#b0c8f0 100%);"></div>
<div style="left:715px;top:1656px;width:37px;height:42px;border:2px solid #7f97c0;background:linear-gradient(90deg,#c2dcf6,#6aaaf0);"></div>
<svg style="position:absolute;left:721px;top:1670px" width="24" height="14" viewBox="0 0 24 14"><path d="M3 3L12 11L21 3" stroke="#6a80ac" stroke-width="3.5" fill="none"/></svg>
<div style="left:17px;top:1696px;width:698px;height:38px;border:2px solid #7f97c0;background:linear-gradient(#6aaaf0,#bcdaf5);"></div>
<div style="left:17px;top:1696px;width:39px;height:38px;border:2px solid #7f97c0;background:linear-gradient(#c2dcf6,#6aaaf0);"></div>
<svg style="position:absolute;left:28px;top:1704px" width="14" height="24" viewBox="0 0 14 24"><path d="M11 3L3 12L11 21" stroke="#6a80ac" stroke-width="3.5" fill="none"/></svg>
<div style="left:54px;top:1696px;width:330px;height:38px;border:2px solid #7f97c0;background:linear-gradient(#abc3ea 0,#b0c8ee 45%,#8eaeea 46%,#b0c8f0 100%);"></div>
<div style="left:675px;top:1696px;width:40px;height:38px;border:2px solid #7f97c0;background:linear-gradient(#c2dcf6,#6aaaf0);"></div>
<svg style="position:absolute;left:690px;top:1704px" width="14" height="24" viewBox="0 0 14 24"><path d="M3 3L11 12L3 21" stroke="#6a80ac" stroke-width="3.5" fill="none"/></svg>
<div style="left:17px;top:1736px;width:54px;height:41px;border:2px solid #8ba6d4;border-radius:3px;box-shadow:inset 0 0 0 2px #e8eef6;background:linear-gradient(#d7e9fb 0%,#b9dbf9 45%,#5fa3f1 48%,#a9d1f8 100%);"></div>
<div class="t" style="left:29px;top:1736px;font-size:17px;line-height:17px;font-weight:bold;color:#444">A</div>
<div class="t" style="left:29px;top:1756px;font-size:17px;line-height:17px;font-weight:bold;color:#333">Z</div>
<div style="left:54px;top:1744px;width:2px;height:24px;background:#8aa0d8;"></div>
<div style="left:792px;top:330px;width:345px;height:41px;background:#dcebfc;border:2px solid #8c7c58;border-top:none;"></div>
<div style="left:792px;top:330px;width:345px;height:5px;background:#f0b43c;"></div>
<svg style="position:absolute;left:812px;top:338px" width="32" height="34" viewBox="0 0 32 34"><path d="M3.5 1.5H21L28.5 9V31.5H3.5Z" fill="#f8f8f8" stroke="#cfcfcf"/><path d="M21 1.5V9H28.5" fill="#eee" stroke="#cfcfcf"/><rect x="7" y="16" width="9" height="9" fill="#6f9de8"/><rect x="16" y="17" width="8" height="8" fill="#e28a8a"/><circle cx="15" cy="15" r="4.5" fill="#6cc86c"/></svg>
<div class="t" style="left:851.00px;top:343.99px;font-size:26px;line-height:26px;color:#0e2440;letter-spacing:0.786px;">DraggableWidget</div>
<div style="left:782px;top:376px;width:1999px;height:32px;border:2px solid #7b98c4;border-bottom-width:3px;border-radius:11px 11px 0 0;"></div>
<div class="t" style="left:1659.00px;top:380.99px;font-size:26px;line-height:26px;color:#15345c;letter-spacing:1.222px;">ActionScript source</div>
<div style="left:2804px;top:376px;width:286px;height:32px;border:2px solid #7b98c4;border-bottom-width:3px;border-radius:11px 11px 0 0;"></div>
<div class="t" style="left:2842.00px;top:380.99px;font-size:26px;line-height:26px;color:#15345c;letter-spacing:0.933px;">P-code source: –</div>
<div style="left:2806px;top:424px;width:11px;height:3px;background:#15345c;"></div>
<div class="t" style="left:782.00px;top:412.99px;font-size:26px;line-height:26px;color:#15345c;letter-spacing:1.100px;">wotstat.widgets.DraggableWidget</div>
<div style="left:792px;top:450px;width:56px;height:52px;border:2px solid #8aa2d0;border-radius:3px;box-shadow:inset 0 0 0 2px #e4edf8;background:linear-gradient(#d2e6fa 0%,#a6cff7 47%,#4f9bf0 48%,#92c6f8 100%);"></div>
<div style="left:858px;top:450px;width:56px;height:52px;border:2px solid #8aa2d0;border-radius:3px;box-shadow:inset 0 0 0 2px #e4edf8;background:linear-gradient(#d2e6fa 0%,#a6cff7 47%,#4f9bf0 48%,#92c6f8 100%);"></div>
<div style="left:924px;top:450px;width:56px;height:52px;border:2px solid #8aa2d0;border-radius:3px;box-shadow:inset 0 0 0 2px #e4edf8;background:linear-gradient(#d2e6fa 0%,#a6cff7 47%,#4f9bf0 48%,#92c6f8 100%);"></div>
<div style="left:990px;top:450px;width:56px;height:52px;border:2px solid #8aa2d0;border-radius:3px;box-shadow:inset 0 0 0 2px #e4edf8;background:linear-gradient(#d2e6fa 0%,#a6cff7 47%,#4f9bf0 48%,#92c6f8 100%);"></div>
<div style="left:1056px;top:450px;width:59px;height:52px;border:2px solid #8aa2d0;border-radius:3px;box-shadow:inset 0 0 0 2px #e4edf8;background:linear-gradient(#d2e6fa 0%,#a6cff7 47%,#4f9bf0 48%,#92c6f8 100%);"></div>
<div style="left:1126px;top:450px;width:55px;height:52px;border:2px solid #8aa2d0;border-radius:3px;box-shadow:inset 0 0 0 2px #e4edf8;background:linear-gradient(#d2e6fa 0%,#a6cff7 47%,#4f9bf0 48%,#92c6f8 100%);"></div>
<svg style="position:absolute;left:803px;top:456px" width="38" height="38" viewBox="0 0 38 38"><path d="M1.5 1.5H11L33 23.5L23.5 33L1.5 11Z" fill="#fafafa" stroke="#c4c4c4" stroke-width="1.5"/><path d="M13 13L25 25" stroke="#b8dcf8" stroke-width="7"/><rect x="5" y="5" width="4" height="4" fill="#a8c0d8" stroke="#c8c8c8"/><circle cx="29" cy="28" r="6.5" fill="#6aa040" stroke="#3e7020" stroke-width="1.5"/><path d="M29 24.5V31.5M25.5 28H32.5" stroke="#fff" stroke-width="2.2"/></svg>
<svg style="position:absolute;left:869px;top:456px" width="38" height="38" viewBox="0 0 38 38"><path d="M1.5 1.5H11L33 23.5L23.5 33L1.5 11Z" fill="#fafafa" stroke="#c4c4c4" stroke-width="1.5"/><path d="M13 13L25 25" stroke="#b8dcf8" stroke-width="7"/><rect x="5" y="5" width="4" height="4" fill="#a8c0d8" stroke="#c8c8c8"/><circle cx="29" cy="28" r="6.5" fill="#e07a30" stroke="#a84a18" stroke-width="1.5"/><path d="M25.5 28H32.5" stroke="#fff" stroke-width="2.5"/></svg>
<svg style="position:absolute;left:934px;top:456px" width="40" height="40" viewBox="0 0 40 40"><path d="M2 2H20L26 8V31H2Z" fill="#fff" stroke="#8aa0b8" stroke-width="1.5"/><text x="6" y="18" font-family="Liberation Mono" font-weight="bold" font-size="13" fill="#b01818">A</text><text x="4" y="30" font-family="Liberation Mono" font-weight="bold" font-size="13" fill="#b01818">B</text><circle cx="21" cy="22" r="7" fill="#c0e8fc" stroke="#808890" stroke-width="2"/><rect x="27" y="28" width="5" height="5" fill="#f0b030" stroke="#c08020"/></svg>
<svg style="position:absolute;left:1000px;top:456px" width="36" height="38" viewBox="0 0 36 38"><path d="M6 31L24 6Q28 1 32 5Q35 9 30 13L12 35Q7 39 4 36Q1 33 6 31Z" fill="#3a78c8"/><path d="M22 9Q28 4 31 7Q33 10 28 14Z" fill="#d8ecff"/><path d="M16 19L24 27L12 35Q6 39 3 35Q1 31 5 28Z" fill="#f5b030" stroke="#d08010" stroke-width="1"/><path d="M8 28Q10 24 14 23" stroke="#fff3b0" stroke-width="3" fill="none"/></svg>
<svg style="position:absolute;left:1068px;top:456px" width="40" height="40" viewBox="0 0 40 40"><ellipse cx="15" cy="6" rx="6" ry="4" fill="#d070e0"/><ellipse cx="22" cy="7" rx="6" ry="4" fill="#70d060"/><path d="M3 30L12 20" stroke="#5a8ad0" stroke-width="6" stroke-linecap="round"/><circle cx="5" cy="29" r="4.5" fill="#f0b040"/><path d="M21 31L30 21" stroke="#c03030" stroke-width="6" stroke-linecap="round"/><circle cx="21" cy="31" r="4.5" fill="#c8e8c0"/></svg>
<svg style="position:absolute;left:1136px;top:456px" width="40" height="38" viewBox="0 0 40 38"><circle cx="8" cy="8" r="4" fill="#f4a8a8" stroke="#704040" stroke-width="1.5"/><circle cx="8" cy="18" r="4" fill="#f4a8a8" stroke="#704040" stroke-width="1.5"/><circle cx="8" cy="28" r="4" fill="#f4a8a8" stroke="#704040" stroke-width="1.5"/><path d="M15 7H33M15 17H33M15 27H33" stroke="#222" stroke-width="2.5"/></svg>
<div class="t" style="left:2221.00px;top:460.99px;font-size:26px;line-height:26px;color:#15345c;letter-spacing:0.857px;">Library:</div>
<div style="left:2326px;top:451px;width:369px;height:40px;border:2px solid #8ba6d4;border-radius:3px;box-shadow:inset 0 0 0 1px #e8f1fb;background:linear-gradient(#d7e9fb 0%,#b9dbf9 45%,#5fa3f1 48%,#a9d1f8 100%);"></div>
<div class="t" style="left:2338.00px;top:458.99px;font-size:26px;line-height:26px;color:#15345c;letter-spacing:0.826px;">Flash (playerglobal.swc)</div>
<svg style="position:absolute;left:2664px;top:462px" width="22" height="14" viewBox="0 0 22 14"><path d="M3 3L11 10L19 3" stroke="#6a7fa6" stroke-width="3" fill="none"/></svg>
<div style="left:2717px;top:450px;width:54px;height:44px;border:2px solid #8aa2d0;border-radius:3px;box-shadow:inset 0 0 0 2px #e4edf8;background:linear-gradient(#d2e6fa 0%,#a6cff7 47%,#4f9bf0 48%,#92c6f8 100%);"></div>
<svg style="position:absolute;left:2727px;top:454px" width="36" height="36" viewBox="0 0 36 36"><circle cx="11" cy="25" r="6" fill="none" stroke="#666" stroke-width="3"/><circle cx="24" cy="11" r="6" fill="none" stroke="#666" stroke-width="3"/><circle cx="11" cy="25" r="6" fill="none" stroke="#e0e0e0" stroke-width="1"/><circle cx="24" cy="11" r="6" fill="none" stroke="#e0e0e0" stroke-width="1"/><path d="M15 21L20 15" stroke="#555" stroke-width="2.5"/></svg>
<div style="left:782px;top:512px;width:2000px;height:1181px;border:2px solid #7b93bd;border-right:none;border-bottom:none;background:#b8d9f9;"></div>
<div style="left:892px;top:514px;width:1852px;height:1140px;background:#fff;"></div>
<div style="left:2744px;top:512px;width:38px;height:1142px;border-left:2px solid #7b93bd;border-right:2px solid #7f97c0;background:linear-gradient(90deg,#6aaaf0,#bcdaf5);"></div>
<div style="left:2744px;top:512px;width:38px;height:40px;border:2px solid #7f97c0;background:linear-gradient(90deg,#c2dcf6,#6aaaf0);"></div>
<svg style="position:absolute;left:2751px;top:525px" width="24" height="14" viewBox="0 0 24 14"><path d="M3 11L12 3L21 11" stroke="#6a80ac" stroke-width="3.5" fill="none"/></svg>
<div style="left:2744px;top:838px;width:38px;height:54px;border:2px solid #7f97c0;background:linear-gradient(90deg,#abc3ea 0,#b0c8ee 55%,#8eaeea 56%,#b0c8f0 100%);"></div>
<div style="left:2744px;top:1614px;width:38px;height:40px;border:2px solid #7f97c0;background:linear-gradient(90deg,#c2dcf6,#6aaaf0);"></div>
<svg style="position:absolute;left:2751px;top:1627px" width="24" height="14" viewBox="0 0 24 14"><path d="M3 3L12 11L21 3" stroke="#6a80ac" stroke-width="3.5" fill="none"/></svg>
<div style="left:892px;top:1654px;width:1852px;height:38px;border-top:2px solid #7b93bd;border-bottom:2px solid #7f97c0;background:linear-gradient(#6aaaf0,#bcdaf5);"></div>
<div style="left:892px;top:1654px;width:40px;height:38px;border:2px solid #7f97c0;background:linear-gradient(#c2dcf6,#6aaaf0);"></div>
<svg style="position:absolute;left:903px;top:1661px" width="14" height="24" viewBox="0 0 14 24"><path d="M11 3L3 12L11 21" stroke="#6a80ac" stroke-width="3.5" fill="none"/></svg>
<div style="left:930px;top:1654px;width:1119px;height:38px;border:2px solid #7f97c0;background:linear-gradient(#abc3ea 0,#b0c8ee 45%,#8eaeea 46%,#b0c8f0 100%);"></div>
<div style="left:2705px;top:1654px;width:40px;height:38px;border:2px solid #7f97c0;background:linear-gradient(#c2dcf6,#6aaaf0);"></div>
<svg style="position:absolute;left:2721px;top:1661px" width="14" height="24" viewBox="0 0 14 24"><path d="M3 3L11 12L3 21" stroke="#6a80ac" stroke-width="3.5" fill="none"/></svg>
<div class="mono t" style="left:898px;top:516.80px;width:1840px;font-size:23.37px;line-height:30px;color:#000;overflow:hidden;height:1137px">      }

      <span style="color:#3232d8">public</span> <span style="color:#3232d8">function</span> <span style="color:#3232d8">get</span> isLocked() : Boolean
      {
         <span style="color:#3232d8">return</span> _isLocked;
      }

      <span style="color:#3232d8">public</span> <span style="color:#3232d8">function</span> <span style="color:#3232d8">get</span> isHidden() : Boolean
      {
         <span style="color:#3232d8">return</span> isContentHidden;
      }

      <span style="color:#3232d8">public</span> <span style="color:#3232d8">function</span> dispose() : void
      {
         dragArea.removeEventListener(<span style="color:#c46a1e">&quot;mouseDown&quot;</span>,onMouseDown);
         App.instance.removeEventListener(<span style="color:#c46a1e">&quot;mouseDown&quot;</span>,onAppMouseDown);
         App.instance.removeEventListener(<span style="color:#c46a1e">&quot;mouseUp&quot;</span>,onAppMouseUp);
         App.instance.removeEventListener(<span style="color:#c46a1e">&quot;mouseMove&quot;</span>,onAppMouseMove);
         resizeControl.removeEventListener(<span style="color:#c46a1e">&quot;RESIZE_MOVE&quot;</span>,onResizeControlChange);
         resizeControl.removeEventListener(<span style="color:#c46a1e">&quot;RESIZE_END&quot;</span>,onResizeControlEnd);
         loader.contentLoaderInfo.removeEventListener(<span style="color:#c46a1e">&quot;complete&quot;</span>,onLoaderComplete);
         hideShowBtn.removeEventListener(<span style="color:#c46a1e">&quot;mouseDown&quot;</span>,onHideShowButtonMouseDown);
         <span style="color:#3232d8">for</span> <span style="color:#3232d8">each</span>(<span style="color:#3232d8">var</span> _loc1_ <span style="color:#3232d8">in</span> [hideShowBtn,lockBtn,resizeBtn,contextMenuBtn])
         {
            _loc1_.dispose();
         }
         loader.unload();
      }

      <span style="color:#3232d8">public</span> <span style="color:#3232d8">function</span> setFrame(param1:uint, param2:uint, param3:ByteArray) : void
      {
         <span style="color:#3232d8">if</span>(param1 != targetContentWidth &amp;&amp; !resizeControl.isResizing)
         {
            <span style="color:#3232d8">return</span>;
         }
         loader.unload();
         loader.loadBytes(param3);
         contentWidth = param1;</div>
<div class="mono t" style="left:800px;top:516.80px;width:78px;text-align:right;font-size:23.37px;line-height:30px;color:#2f5078;letter-spacing:0px;-webkit-text-stroke:0.2px #b8d9f9;height:1137px;overflow:hidden">198
199
200
201
202
203
204
205
206
207
208
209
210
211
212
213
214
215
216
217
218
219
220
221
222
223
224
225
226
227
228
229
230
231
232
233
234
235</div>
<div style="left:783px;top:1692px;width:1999px;height:71px;border-top:3px solid #fff;border-left:3px solid #fff;border-right:3px solid #5c6c7c;border-bottom:3px solid #5c6c7c;"></div>
<div style="left:1543px;top:1707px;width:288px;height:42px;border:2px solid #8ba6d4;border-radius:3px;box-shadow:inset 0 0 0 1px #e8f1fb;background:linear-gradient(#d7e9fb 0%,#b9dbf9 45%,#5fa3f1 48%,#a9d1f8 100%);"></div>
<svg style="position:absolute;left:1562px;top:1708px" width="36" height="36" viewBox="0 0 36 36"><rect x="3.2" y="3.2" width="26" height="31" fill="#fff" stroke="#3a6ec0" stroke-width="2.5"/><rect x="6.5" y="6.5" width="19.5" height="18" fill="#d6e4f8"/><rect x="6.5" y="24" width="19.5" height="6" fill="#6ab0f0"/><path d="M11 28L29 10" stroke="#c88a38" stroke-width="7"/><path d="M11 28L29 10" stroke="#f2d860" stroke-width="4"/><path d="M26 7L33 14" stroke="#e0a050" stroke-width="5"/><path d="M8 31L12 27" stroke="#5a3a10" stroke-width="4"/></svg>
<div class="t" style="left:1601.00px;top:1716.99px;font-size:26px;line-height:26px;color:#15345c;letter-spacing:1.312px;">Edit ActionScript</div>
<div class="t" style="left:1841.00px;top:1716.99px;font-size:26px;line-height:26px;color:#15345c;letter-spacing:0.769px;">(Experimental)</div>
<div style="left:1743px;top:1772px;width:8px;height:8px;border-radius:50%;background:#8d9fbb;"></div>
<div style="left:1757px;top:1772px;width:8px;height:8px;border-radius:50%;background:#8d9fbb;"></div>
<div style="left:1771px;top:1772px;width:8px;height:8px;border-radius:50%;background:#8d9fbb;"></div>
<div style="left:1785px;top:1772px;width:8px;height:8px;border-radius:50%;background:#8d9fbb;"></div>
<div style="left:1799px;top:1772px;width:8px;height:8px;border-radius:50%;background:#8d9fbb;"></div>
<div style="left:1813px;top:1772px;width:8px;height:8px;border-radius:50%;background:#8d9fbb;"></div>
<div style="left:764px;top:1017px;width:8px;height:8px;border-radius:50%;background:#8d9fbb;"></div>
<div style="left:764px;top:1031px;width:8px;height:8px;border-radius:50%;background:#8d9fbb;"></div>
<div style="left:764px;top:1045px;width:8px;height:8px;border-radius:50%;background:#8d9fbb;"></div>
<div style="left:764px;top:1059px;width:8px;height:8px;border-radius:50%;background:#8d9fbb;"></div>
<div style="left:764px;top:1073px;width:8px;height:8px;border-radius:50%;background:#8d9fbb;"></div>
<div style="left:2787px;top:1048px;width:8px;height:8px;border-radius:50%;background:#8d9fbb;"></div>
<div style="left:2787px;top:1062px;width:8px;height:8px;border-radius:50%;background:#8d9fbb;"></div>
<div style="left:2787px;top:1076px;width:8px;height:8px;border-radius:50%;background:#8d9fbb;"></div>
<div style="left:2787px;top:1090px;width:8px;height:8px;border-radius:50%;background:#8d9fbb;"></div>
<div style="left:2787px;top:1104px;width:8px;height:8px;border-radius:50%;background:#8d9fbb;"></div>
<div class="t" style="left:2803.00px;top:1067.99px;font-size:26px;line-height:26px;color:#15345c;letter-spacing:0.857px;">Select class and click</div>
<div class="t" style="left:2803.00px;top:1099.99px;font-size:26px;line-height:26px;color:#15345c;letter-spacing:1.545px;">a trait in Actionscript</div>
<div class="t" style="left:2804.00px;top:1131.99px;font-size:26px;line-height:26px;color:#15345c;letter-spacing:1.353px;">source to edit it.</div>
<div style="left:9px;top:1786px;width:3082px;height:59px;border-top:3px solid #566878;border-left:3px solid #566878;border-bottom:4px solid #ffffff;border-right:4px solid #fff;background:#badcfb;"></div>
<svg style="position:absolute;left:3044px;top:1799px" width="32" height="32" viewBox="0 0 32 32"><circle cx="16" cy="14" r="13.5" fill="#84c06a" stroke="#4a9a2c" stroke-width="2"/><circle cx="16" cy="14" r="11" fill="none" stroke="#b4dca0" stroke-width="1.5"/><path d="M10 14L14 18L21 10" stroke="#fff" stroke-width="3.5" fill="none"/></svg>
</body></html>
